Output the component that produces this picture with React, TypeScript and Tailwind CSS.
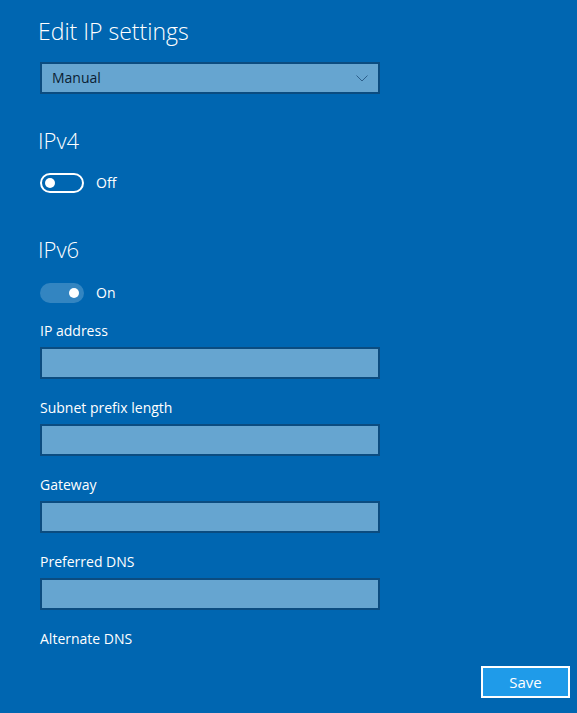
import { useState } from 'react';

const fields = ['IP address', 'Subnet prefix length', 'Gateway', 'Preferred DNS'];

const Toggle = ({ on, onClick }: { on: boolean; onClick: () => void }) => (
  <button
    onClick={onClick}
    className={
      on
        ? 'relative w-11 h-5 rounded-full bg-[#3385c1]'
        : 'relative w-11 h-5 rounded-full border-2 border-white'
    }
  >
    <span
      className={
        on
          ? 'absolute top-[5px] right-[5px] w-2.5 h-2.5 rounded-full bg-white'
          : 'absolute top-[3px] left-[3px] w-2.5 h-2.5 rounded-full bg-white'
      }
    />
  </button>
);

export default function App() {
  const [ipv4, setIpv4] = useState(false);
  const [ipv6, setIpv6] = useState(true);

  return (
    <div
      className="w-[577px] h-[713px] overflow-hidden bg-[#0066b1] text-white px-10 pt-[15px]"
      style={{ fontFamily: '"Open Sans", "Noto Sans", sans-serif' }}
    >
      <h1 className="text-[23px] font-light leading-8 -ml-0.5">Edit IP settings</h1>

      <div className="mt-[15px] w-[340px] h-8 bg-[#66a5d0] border-2 border-[#0b4c80] flex items-center justify-between pl-2.5 pr-2.5 text-[#0a1e33] text-sm">
        <span>Manual</span>
        <svg width="12" height="7" viewBox="0 0 12 7" fill="none">
          <path d="M0.5 0.5 L6 6 L11.5 0.5" stroke="#2d5f8a" strokeWidth="1" />
        </svg>
      </div>

      <h2 className="mt-[30px] text-[22px] font-light leading-8 -ml-0.5">IPv4</h2>
      <div className="mt-[17px] flex items-center gap-3 text-sm">
        <Toggle on={ipv4} onClick={() => setIpv4(!ipv4)} />
        <span>{ipv4 ? 'On' : 'Off'}</span>
      </div>

      <h2 className="mt-[40px] text-[22px] font-light leading-8 -ml-0.5">IPv6</h2>
      <div className="mt-[18px] flex items-center gap-3 text-sm">
        <Toggle on={ipv6} onClick={() => setIpv6(!ipv6)} />
        <span>{ipv6 ? 'On' : 'Off'}</span>
      </div>

      <div className="mt-[18px] flex flex-col gap-[19px]">
        {fields.map((f) => (
          <div key={f}>
            <div className="text-sm leading-5">{f}</div>
            <input className="mt-1.5 block w-[340px] h-8 bg-[#66a5d0] border-2 border-[#0b4c80] outline-none px-2 text-sm text-[#0a1e33]" />
          </div>
        ))}
        <div className="text-sm leading-5">Alternate DNS</div>
      </div>

      <div className="flex justify-end -mr-[33px] mt-[17px]">
        <button className="w-[89px] h-[32px] bg-[#1f9be9] border-2 border-white text-[15px] text-white">
          Save
        </button>
      </div>
    </div>
  );
}
